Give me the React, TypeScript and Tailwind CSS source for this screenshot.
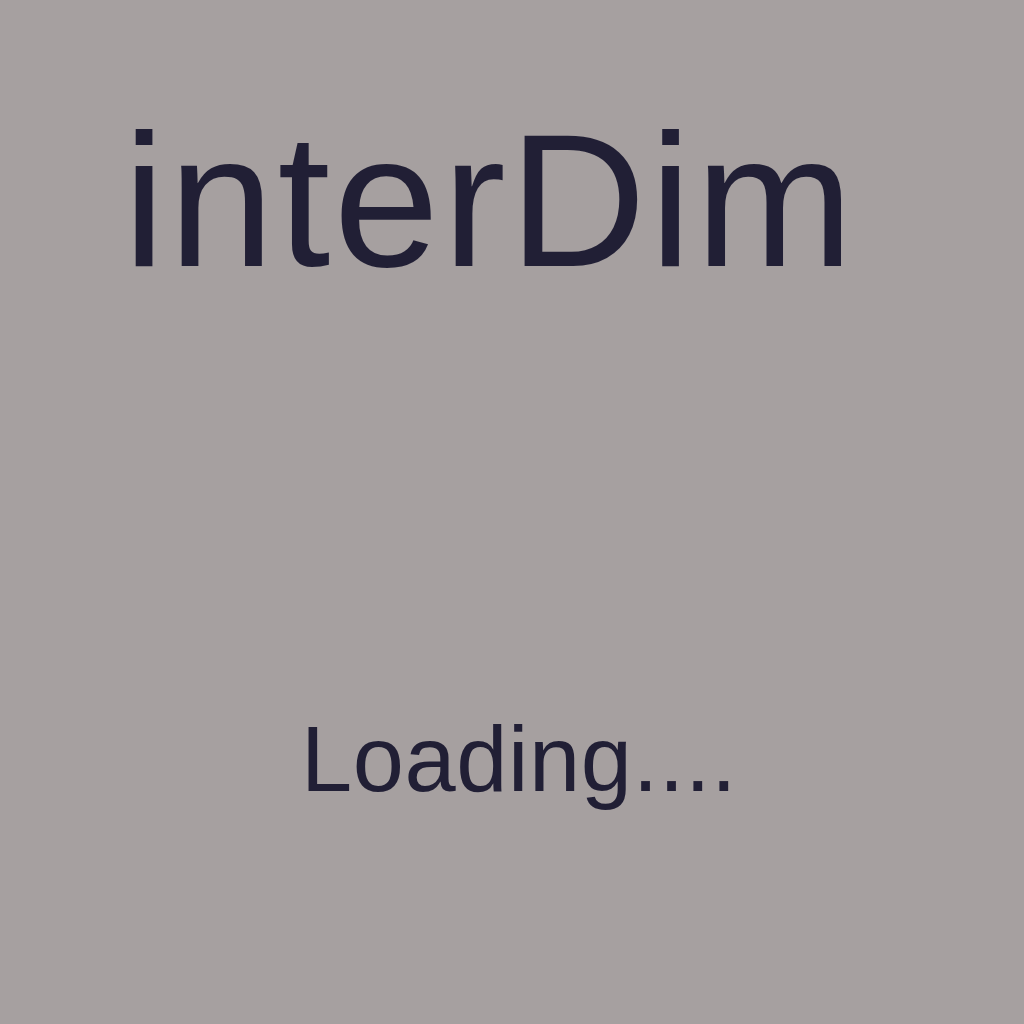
import React from 'react';

const App = () => {
  return (
    <div
      className="w-[1024px] h-[1024px] bg-[#a6a0a0] text-[#211f35] flex flex-col overflow-hidden"
      style={{ fontFamily: '"Liberation Sans", Arial, sans-serif' }}
    >
      <h1 className="pt-[105px] pl-[123px] text-[190px] leading-none font-normal tracking-[3.3px]">interDim</h1>
      <p className="mt-[418px] pl-[301px] text-[92px] leading-none tracking-[0.6px]">Loading....</p>
    </div>
  );
};

export default App;
